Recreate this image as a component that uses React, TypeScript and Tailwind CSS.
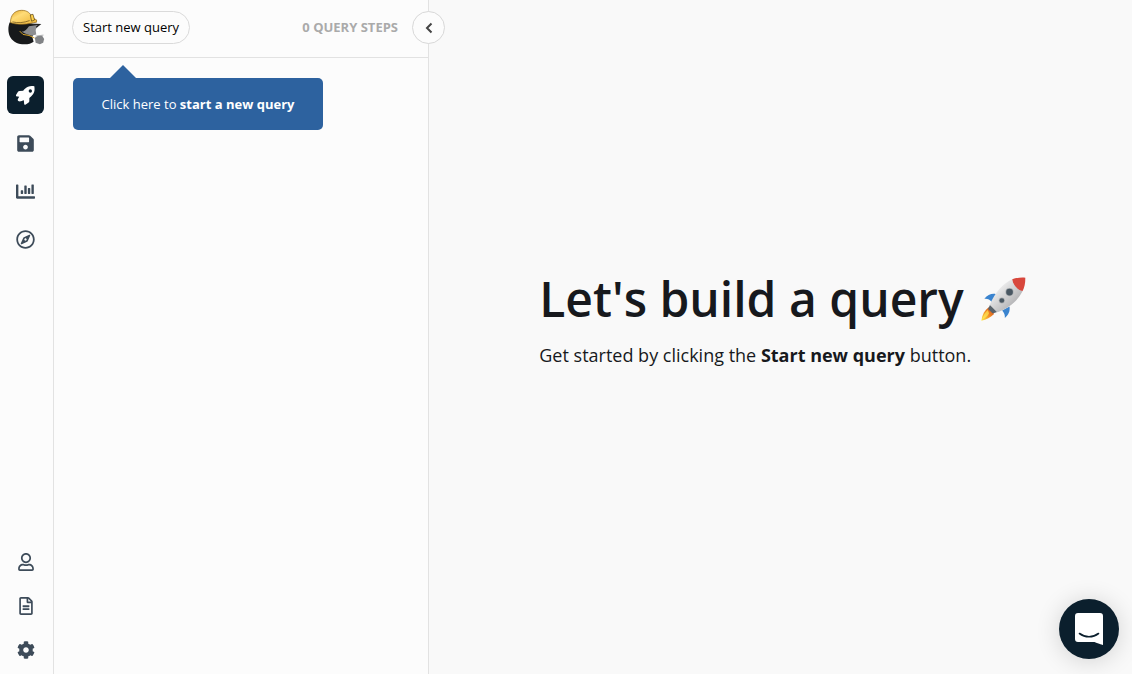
import React from 'react';
import {
  FaSave,
  FaChartBar,
  FaRegCompass,
  FaRegUser,
  FaRegFileAlt,
  FaCog,
} from 'react-icons/fa';

interface NavItem {
  label: string;
  icon: React.ComponentType<{ className?: string }>;
}

const RocketIcon: React.FC<{ className?: string }> = ({ className }) => (
  <svg viewBox="0 0 57 57" className={className} fill="currentColor" aria-hidden="true">
    <path
      fillRule="evenodd"
      d="M55 1c1.500 9 1 17-4 24-3 4-7 8-11 11v8c0 3-1 4-3 6l-9 6c-2 1-3.500 0-3.500-2l-1-11c-4 1-10 4-15 3-3-1-4-3-3-6l4-8-9-1c-2 0-2-2-1-3l6-10c1-2 3-3 5-3l11-.5C25 9 30 4 36 2c6-2 13-2 19-1zM43 10a5 5 0 100 10 5 5 0 000-10z"
    />
  </svg>
);

const MAIN_NAV: NavItem[] = [
  { label: 'Query builder', icon: RocketIcon },
  { label: 'Saved queries', icon: FaSave },
  { label: 'Reports', icon: FaChartBar },
  { label: 'Explore', icon: FaRegCompass },
];

const FOOTER_NAV: NavItem[] = [
  { label: 'Account', icon: FaRegUser },
  { label: 'Docs', icon: FaRegFileAlt },
  { label: 'Settings', icon: FaCog },
];

const Logo: React.FC = () => (
  <svg viewBox="20 26 114 112" className="h-[37px] w-[38px]" aria-hidden="true">
    <defs>
      <linearGradient id="hat" x1="0" y1="0" x2="1" y2="1">
        <stop offset="0" stopColor="#e3a526" />
        <stop offset=".35" stopColor="#ffdc78" />
        <stop offset="1" stopColor="#ecb233" />
      </linearGradient>
    </defs>
    <path d="M28 66C22 78 22 98 30 112c9 14 24 21 42 21 12 0 22-3 28-8l-4-15 14-34-30-10z" fill="#17191b" />
    <path d="M86 78l30-4-10 14 2 15-14 4-18-6-12-6c10-1 16-9 22-17z" fill="#8d8e91" />
    <path d="M90 72l28 1-10 8" fill="none" stroke="#222" strokeWidth="4" />
    <path d="M58 93l10 10 18 3 17 8" fill="none" stroke="#d9a72e" strokeWidth="3" />
    <path d="M30 67c0-22 12-37 34-37 16 0 27 8 31 22l4 2 10 5v7c-12 1-24 6-42 6-16 1-26-1-37-5z" fill="url(#hat)" stroke="#8a6114" strokeWidth="2" />
    <path d="M36 65c16 4 34 3 52-4" fill="none" stroke="#5e4412" strokeWidth="2" />
    <path d="M90 44l8-2 5 17-9 4z" fill="#ffd14a" stroke="#493511" strokeWidth="2" />
    <path d="M104 113l8-5 14-1 6 10-3 11-10 5-13-5z" fill="#818386" />
    <path d="M106 108l24-3" stroke="#8b8d90" strokeWidth="2" />
  </svg>
);

const RocketEmoji: React.FC = () => (
  <svg viewBox="540 55 140 140" className="h-[47px] w-[47px] shrink-0" role="img" aria-label="rocket">
    <defs>
      <linearGradient id="hull" x1="0" y1="0" x2="1" y2="1">
        <stop offset="0.2" stopColor="#f4f4f4" />
        <stop offset="0.75" stopColor="#b4b4b6" />
      </linearGradient>
      <linearGradient id="flame" x1="1" y1="0" x2="0" y2="1">
        <stop offset="0" stopColor="#c9421e" />
        <stop offset="0.5" stopColor="#f08a24" />
        <stop offset="1" stopColor="#ffe94f" />
      </linearGradient>
    </defs>
    <path d="M566 148c-12 9-20 22-22 40 15-3 28-10 38-20z" fill="url(#flame)" />
    <path d="M563 156c-8 8-13 17-16 28 10-4 16-10 20-18z" fill="#fff05a" opacity=".65" />
    <path d="M588 109c-13-3-25 2-35 14 9-1 16 2 23 10z" fill="#3b84cf" />
    <path d="M606 158c6 7 9 14 8 22 11-9 16-20 14-34z" fill="#3b84cf" />
    <path d="M570 141l-6 12 14 14 13-5z" fill="#59636b" />
    <path d="M636 65c-27 12-51 38-67 76l23 22c36-14 60-34 75-63z" fill="url(#hull)" />
    <path d="M636 65c13-5 26-6 39-5 0 15-2 28-8 40-15-4-28-16-31-35z" fill="#d8473c" />
    <circle cx="628" cy="103" r="12" fill="#a9adb0" />
    <circle cx="628" cy="103" r="10" fill="#495762" />
    <circle cx="605" cy="128" r="9" fill="#a9adb0" />
    <circle cx="605" cy="128" r="7" fill="#495762" />
  </svg>
);

const NavButton: React.FC<{ item: NavItem; active?: boolean }> = ({ item, active }) => {
  const Icon = item.icon;

  return (
    <button
      type="button"
      aria-label={item.label}
      className={`flex h-[38px] w-[37px] items-center justify-center rounded-md ${
        active ? 'bg-[#0b1f2d] text-white' : 'text-[#3d4b59]'
      }`}
    >
      <Icon className="h-[19px] w-[19px]" />
    </button>
  );
};

const Sidebar: React.FC = () => (
  <nav className="flex w-[54px] shrink-0 flex-col border-r border-[#e2e2e2] pt-[9px] pb-[5px] pl-[7px]">
    <a href="#" aria-label="Home" className="block">
      <Logo />
    </a>
    <div className="mt-[30px] flex flex-col gap-[10px]">
      {MAIN_NAV.map((item, i) => (
        <NavButton key={item.label} item={item} active={i === 0} />
      ))}
    </div>
    <div className="mt-auto flex flex-col gap-[6px]">
      {FOOTER_NAV.map((item) => {
        const Icon = item.icon;
        return (
          <button
            key={item.label}
            type="button"
            aria-label={item.label}
            className="flex h-[38px] w-[37px] items-center justify-center text-[#3d4b59]"
          >
            <Icon className="h-[18px] w-[18px]" />
          </button>
        );
      })}
    </div>
  </nav>
);

const QueryPanel: React.FC = () => (
  <section className="relative w-[375px] shrink-0 border-r border-[#e2e2e2]">
    <header className="flex h-[58px] items-center justify-between border-b border-[#e2e2e2] pr-[30px] pb-[2px] pl-[18px]">
      <button
        type="button"
        className="h-[33px] rounded-full border border-[#dadada] px-[10px] text-[13px] text-black"
      >
        Start new query
      </button>
      <span className="text-[13px] font-bold text-[#aaaaaa]">0 QUERY STEPS</span>
    </header>

    <button
      type="button"
      aria-label="Collapse panel"
      className="absolute top-[11px] -right-[17px] z-10 flex h-[33px] w-[33px] items-center justify-center rounded-full border border-[#d8d8d8] bg-[#fcfcfc]"
    >
      <svg viewBox="0 0 8 12" className="h-3 w-2" fill="none" stroke="#444" strokeWidth="2">
        <path d="M6.500 1.500L2 6l4.500 4.500" />
      </svg>
    </button>

    {/* hint bubble */}
    <div className="ml-[19px] w-[250px] pt-[7px]">
      <svg viewBox="0 0 26 13" className="ml-[37px] block h-[13px] w-[26px]" fill="#2d629f">
        <path d="M0 13L13 0l13 13z" />
      </svg>
      <div className="rounded-[5px] bg-[#2d629f] px-4 py-4 text-center text-[13px] leading-5 text-white">
        Click here to <strong className="font-bold">start a new query</strong>
      </div>
    </div>
  </section>
);

const EmptyState: React.FC = () => (
  <main className="flex flex-1 items-center justify-center bg-[#f9f9f9] pb-[38px] pl-[5px]">
    <div className="text-[#17191d]">
      <h1 className="flex items-center gap-4 text-5xl leading-[64px] font-semibold">
        Let's build a query
        <RocketEmoji />
      </h1>
      <p className="mt-[10px] text-lg leading-7">
        Get started by clicking the <strong className="font-bold">Start new query</strong> button.
      </p>
    </div>
  </main>
);

export default function App() {
  return (
    <div className="flex min-h-screen bg-[#fcfcfc] font-['Open_Sans',sans-serif]">
      <Sidebar />
      <QueryPanel />
      <EmptyState />

      {/* chat launcher */}
      <button
        type="button"
        aria-label="Open chat"
        className="fixed right-[13px] bottom-[15px] flex h-[60px] w-[60px] items-center justify-center rounded-full bg-[#0b1f2d] shadow-[0_2px_24px_rgba(0,0,0,0.16)]"
      >
        <svg viewBox="0 0 28 32" className="h-8 w-7">
          <path d="M3 0h22a3 3 0 013 3v29s-4-1-8.500-3H3a3 3 0 01-3-3V3a3 3 0 013-3z" fill="#fff" />
          <path d="M4.500 20.500c5.500 4.300 13.500 4.300 19 0" fill="none" stroke="#0b1f2d" strokeWidth="1.600" strokeLinecap="round" />
        </svg>
      </button>
    </div>
  );
}
